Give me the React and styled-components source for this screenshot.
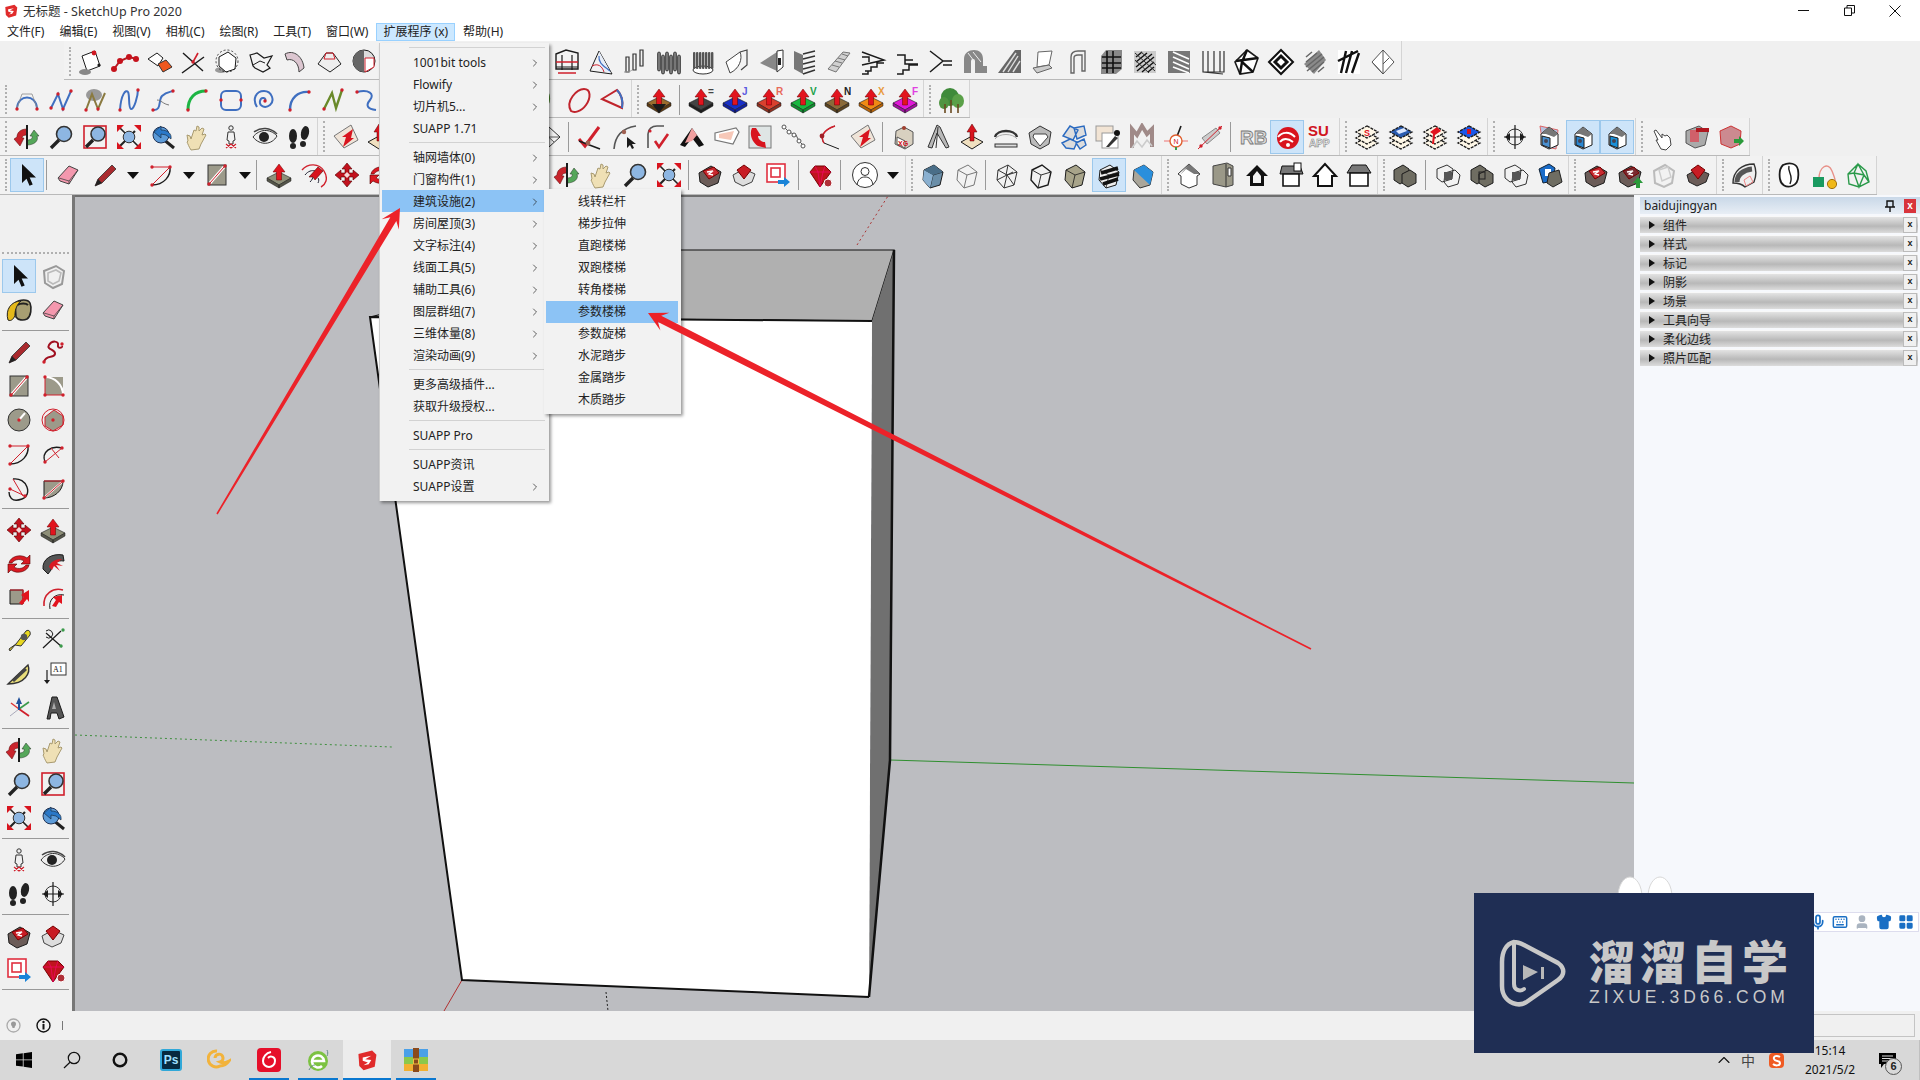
import React from "react";
import styled, { createGlobalStyle } from "styled-components";
import { ChevronRight, ChevronUp, Keyboard, LayoutGrid, Mic, Shirt, User } from "lucide-react";

const R = "#d0202c";
const K = "#1b1b1b";
const F = "#9c9a8a";
const BL = "#3f6fc0";

const arc = (d, c = K, w = 1.4) => <path d={d} fill="none" stroke={c} strokeWidth={w} />;
const dot = (x, y, c = R, r = 1.7) => <circle cx={x} cy={y} r={r} fill={c} />;

const SuLogo = (
  <>
    <path d="M4 7 20 3l5 5-2 14-13 4-5-5z" fill="#e02b2b" />
    <path d="M9 11l10-2-7 4 7 1-3 5-6 1 5-3-6-2z" fill="#fff" />
  </>
);

const push = (top, side, label, lc) => (
  <>
    <path d="M2 17 14 11l12 6-12 7z" fill={top} stroke={K} strokeWidth=".6" />
    <path d="M2 17v3l12 7v-3zM26 17v3l-12 7v-3z" fill={side} stroke={K} strokeWidth=".5" />
    <path d="M14 3l-6 8h3.5v8h5v-8H20z" fill="#e2141e" stroke="#600" strokeWidth=".5" />
    {label && (
      <text x="21" y="9" fontSize="10" fontWeight="700" fill={lc} fontFamily="Liberation Sans, sans-serif">
        {label}
      </text>
    )}
  </>
);

// three stacked sheets, only the top one takes the colour
const layers = (top, mark) => (
  <>
    {[20, 15].map((y) => (
      <path key={y} d={`M14 ${y - 6}l11 6-11 6-11-6z`} fill="#fff8e8" stroke={K} strokeWidth="1.3" strokeDasharray="3 1" />
    ))}
    <path d="M14 3l11 6-11 6-11-6z" fill={top} stroke={K} strokeWidth="1.3" strokeDasharray="3 1" />
    {mark}
  </>
);

const hatch = (c, w = 1.5) => arc("M5 9l6-5M5 14l11-9M5 19l16-13M6 23l17-14M11 24l12-10M17 24l6-5", c, w);

const house = (c, plane) => (
  <>
    {plane && <path d="M5 3l18 4-2 19-13-3z" fill="#b8c4e0" stroke="#d66" />}
    <path d="M14 4l9 7v11l-9 4-8-4V11z" fill="#fff" stroke={K} />
    <path d="M14 4l9 7-4 3-8-3-5 0z" fill="#777" />
    <path d="M7 13l8 2v10l-8-3z" fill={c} stroke={K} />
    <circle cx="11" cy="18" r="2" fill="#445" />
  </>
);

const box = (a, b, c) => (
  <>
    <path d="M5 9 15 4l9 7-3 13-10 3-7-8z" fill={a} stroke={K} />
    <path d="M5 9l9 5 10-3M14 14l-3 13" fill="none" stroke={K} strokeWidth=".8" />
    {b && <path d="M5 9l9 5-3 13-7-8z" fill={b} />}
    {c && <path d="M15 4l9 7-10 3-9-5z" fill={c} />}
  </>
);

const ruby = (
  <>
    <path d="M4 11 9 5h10l6 6-11 15z" fill="#c0141e" stroke="#700" />
    <path d="M4 11h21M9 5l3 6 2 15 3-15 2-6" fill="none" stroke="#f07" strokeWidth=".6" />
  </>
);

const rubybook = (c) => (
  <>
    <path d="M3 12 15 5l10 6-3 11-10 4-8-5z" fill="#6b5c58" stroke={K} />
    <path d="M7 10l11-4 5 6-10 6z" fill={c} stroke="#700" />
    <path d="M11 11l6-1-4 3 4 1" fill="none" stroke="#fff" strokeWidth="1.3" />
  </>
);

const cubes = (c, d) => (
  <>
    <path d="M3 9l9-5 6 4v10l-9 5-6-4z" fill={c} stroke={K} />
    <path d="M11 13l8-4 6 4v9l-8 4-6-4z" fill={d} stroke={K} />
  </>
);

const wires = (
  <>
    {arc("M3 8l10-4 6 4-1 10-10 3-5-4z", "#333", 1)}
    {arc("M11 12l10-3 5 5-2 9-10 3-4-5z", "#333", 1)}
    <rect x="10" y="11" width="8" height="8" fill="#555" />
  </>
);

const stairs = (d) => arc(d, K, 1.5);

const icons = {
  select: <path d="M9 3v19l4.5-4.2 3 7 3.2-1.4-3-6.8H23z" fill="#111" />,
  eraser: (
    <>
      <path d="M4 17 15 5l9 4-9 14-9-3z" fill="#f498ae" stroke="#444" />
      <path d="M5 17l10 3 9-11M15 20v3" fill="none" stroke="#444" strokeWidth=".8" />
    </>
  ),
  pencil: (
    <>
      <path d="M4 25l3-7L21 4l4 4-14 14z" fill="#a92a2e" stroke="#333" strokeWidth=".8" />
      <path d="M4 25l3-7 4 4z" fill="#222" />
    </>
  ),
  arcTool: <>{arc("M5 24C17 24 24 15 23 6")}{arc("M5 24 23 6M5 6h18M5 6l0 0", R, 1)}{dot(5, 6)}{dot(23, 6)}{dot(5, 24)}</>,
  rectTool: <><rect x="5" y="4" width="18" height="20" fill={F} stroke="#333" />{arc("M7 22 21 6", "#fff", 3)}{arc("M7 22 21 6", R, 1)}{dot(6, 23)}{dot(22, 5)}</>,
  squiggle: <>{arc("M5 24c2-8 10-3 11-8S7 12 10 7s10-4 9 0 5 3 4 1", "#a01020", 2)}{dot(5, 24)}{dot(23, 6)}</>,
  arcRect: <><path d="M6 5h18v18H6z" fill={F} />{arc("M6 5c10 0 18 8 18 18", "#fff", 2)}{arc("M6 5v18h18", R, 1)}{dot(6, 5)}{dot(6, 23)}{dot(24, 23)}</>,
  circleTool: <><circle cx="14" cy="14" r="11" fill={F} stroke="#333" />{arc("M14 14l6-7", "#fff", 2)}{dot(14, 14)}</>,
  polyTool: <><path d="M6 11l9-7 9 6v9l-10 6-8-5z" fill={F} stroke={R} /><circle cx="14" cy="14" r="11" fill="none" stroke={R} />{dot(14, 14)}</>,
  arc2: <>{arc("M6 22C2 12 12 5 23 8", K)}{arc("M6 22 23 8M12 8l8 10", R, 1)}{dot(6, 22)}{dot(23, 8)}</>,
  arc3: <>{arc("M8 5c14-2 20 16 9 20S4 22 4 18", K)}{arc("M5 15l15 7M8 5l10 17", R, 1)}{dot(5, 15)}{dot(20, 22)}</>,
  pie: <><path d="M5 24V7h19C24 17 15 24 5 24z" fill={F} stroke={K} />{arc("M6 23 23 8", "#fff", 2)}{arc("M5 7h19M5 24 24 7", R, 1)}{dot(5, 24)}{dot(24, 7)}</>,
  move: (
    <>
      <path d="M14 2l5 6h-3v4h4V9l6 5-6 5v-3h-4v4h3l-5 6-5-6h3v-4H8v3l-6-5 6-5v3h4V8H9z" fill="#c2121e" stroke="#500" strokeWidth=".6" />
      <path d="M14 11l3 3-3 3-3-3z" fill="#f4d8d8" />
    </>
  ),
  pushBox: push("#8e8f78", "#55564a", null),
  rotate: <><path d="M4 13C5 7 15 3 22 8l3-3v9h-9l3-3c-5-3-10-1-12 2z" fill="#d91a22" stroke="#500" strokeWidth=".6" /><path d="M24 15c-1 6-11 10-18 5l-3 3v-9h9l-3 3c5 3 10 1 12-2z" fill="#d91a22" stroke="#500" strokeWidth=".6" /></>,
  followMe: <><path d="M4 19C3 9 13 3 24 5l1 6c-7-1-12 2-13 9l-3 4z" fill="#555" stroke={K} /><path d="M10 17c1-5 6-8 13-8l-5 4 6 3-7-1 4 6-6-5-2 4z" fill="#d91a22" /></>,
  followTool: <>{arc("M3 9C9 2 20 2 25 10s1 14-3 16", "#d0202c", 1.4)}{arc("M6 14c3-4 7-5 10-4M11 21c2-2 3-4 3-6M19 22c1-2 1-4 0-5", "#223", 1)}<path d="M10 16 19 6l5 4-8 9-2-3z" fill="#d8141e" stroke="#500" strokeWidth=".6" /></>,
  scale: <><path d="M5 6h13v14H5z" fill={F} stroke={K} />{arc("M5 6h13v14", R, 1.2)}<path d="M24 6l-8 5 3 2-5 6 3 2 5-6 2 3z" fill="#e2141e" /></>,
  offset: <>{arc("M5 22C4 10 14 3 24 6", R, 1.6)}{arc("M11 25C9 16 16 9 25 11", K, 1)}<path d="M23 11l-9 2 3 3-4 6 4 1 3-5 3 2z" fill="#e2141e" /></>,
  paint: <><path d="M10 7c5-4 13-4 15 0 2 5 1 13-3 16-4 2-9 1-11-2z" fill="#a79e72" stroke="#222" strokeWidth="1.6" /><path d="M12 9c4-2 9-2 11 0" fill="none" stroke="#222" strokeWidth="2" /><path d="M3 24C0 14 6 5 16 5c-4 3-6 9-6 13 0 4-4 8-7 6z" fill="#e5b91a" stroke="#222" /></>,
  ghost: <>{arc("M5 9l12-5 8 5-2 13-9 4-8-5z", "#999", 2)}{arc("M9 11l8-3 5 3-2 8-6 3-5-3z", "#bbb", 1.6)}</>,
  tape: <><path d="M4 23l7-5 10-13c3-2 5 1 4 4l-9 11-6-1-5 6z" fill="#e8d820" stroke="#333" /><circle cx="19" cy="11" r="3.2" fill="#555" /></>,
  guide: <>{arc("M4 22 22 5M7 7l16 14", K, 1.2)}{dot(22, 20, "#3a9a4a")}{dot(24, 4, "#3a9a4a")}{arc("M7 5a4 4 0 1 1 0 6", K, 1)}</>,
  protractor: <><path d="M3 24 23 5c3 8-3 19-20 19z" fill="#e8dd7a" stroke="#333" strokeWidth="1.4" />{arc("M8 21 21 9", "#444", 3)}</>,
  text3: <><rect x="12" y="3" width="15" height="12" fill="#fff" stroke="#333" /><text x="14" y="12" fontSize="8" fontFamily="Liberation Serif, serif" fill="#111">A1</text>{arc("M8 10v11", K, 1.2)}<path d="M5 20h6l-3 4z" fill={K} /></>,
  axes: <>{arc("M14 15 6 9", "#d33", 1.4)}{arc("M14 15 24 8", "#3a9a4a", 1.6)}{arc("M14 15 24 22", R, 1.8)}{arc("M14 15 5 22", "#aab", 1)}<path d="M14 3l-3 7h2v6h2v-6h2z" fill="#20509a" /></>,
  a3d: <><path d="M8 25 13 3h5l7 20-5 2-2-6h-6l-1 6z" fill="#555" stroke={K} /><path d="M13 15h4l-2-7z" fill="#aaa" /></>,
  orbit: (
    <>
      <path d="M4 14c0-5 4-8 10-8v6c-3 0-5 1-5 3l2 0-4 8-6-7z" fill="#c8242c" stroke="#500" strokeWidth=".5" />
      <path d="M24 13c2 5-3 9-10 9v-5c3 0 6-1 5-4l-2 0 4-6 5 6z" fill="#55a75a" stroke="#232" strokeWidth=".5" />
      <path d="M14 2v24" stroke={K} strokeWidth="2" />
    </>
  ),
  mag: <>{arc("M4 25l8-8", "#222", 3.4)}<circle cx="17" cy="11" r="7.5" fill="#8db6e2" stroke="#333" strokeWidth="1.6" /></>,
  zoomWin: <><rect x="3" y="3" width="22" height="22" fill="none" stroke="#d0202c" strokeWidth="1.6" />{arc("M5 24l7-7", "#222", 3.4)}<circle cx="17" cy="11" r="7" fill="#8db6e2" stroke="#333" strokeWidth="1.6" /></>,
  zoomExt: <>{arc("M4 24 20 8", "#222", 2.2)}{arc("M5 5l5 5M23 23l-5-5", "#222", 1.6)}<circle cx="14" cy="14" r="5.8" fill="#8db6e2" stroke="#333" /><path d="M2 2h7L2 9zM26 2h-7l7 7zM2 26h7L2 19zM26 26h-7l7-7z" fill="#d8141e" /></>,
  zoomPrev: <>{arc("M14 16l11 9", "#222", 3)}<circle cx="12" cy="12" r="8" fill="#5c9bd8" stroke="#235" /><path d="M5 9l7-6v4c7 0 11 4 10 9l-5-4-5-1v4z" fill="#2a78c8" stroke="#123" strokeWidth=".6" /></>,
  hand: <path d="M5 18 4 12l3 1 1 3 3-9 2 1 1-5 2 1v4l3-3 2 1-2 6 3-1 1 1-5 9-2 5-8 1c-2-3-3-6-4-8z" fill="#efe0b5" stroke="#a89a70" />,
  handO: <path d="M7 7l6 8 0-4 3 2 2-1 3 3 1 7-5 5-5-1-5-9 2 0-4-9z" fill="#fff" stroke="#444" />,
  walk: <><circle cx="14" cy="5" r="2.2" fill="none" stroke="#333" />{arc("M11 9h6l1 8-2 1v3h-4v-3l-2-1z", "#333", 1)}{arc("M9 25l5-4 5 4M9 21l5 4 5-4", R, 1.2)}</>,
  eye: <><path d="M2 14c6-8 17-9 24-1-5 9-17 10-24 1z" fill="#eee" stroke="#333" /><circle cx="13" cy="14" r="5" fill="#222" /><path d="M3 9c7-5 16-5 23 2" fill="none" stroke="#444" strokeWidth="1.5" /></>,
  feet: <><ellipse cx="8" cy="13" rx="4" ry="7" fill="#222" /><rect x="5" y="20" width="6" height="6" rx="3" fill="#222" /><ellipse cx="20" cy="10" rx="4" ry="7" fill="#222" transform="rotate(12 20 10)" /><rect x="15" y="18" width="6" height="6" rx="3" fill="#222" /></>,
  compass: <><circle cx="14" cy="14" r="8" fill="none" stroke="#333" />{arc("M14 2v24M3 14h22", K, 1.2)}<path d="M24 14l-5-4v8zM4 14l5-4v8z" fill={K} /></>,
  page: <><path d="M5 8l13-5 5 15-13 5z" fill="#fff" stroke={K} /><ellipse cx="8" cy="24" rx="6" ry="3" fill="#888" />{dot(17, 5, "#d01822", 2.4)}{dot(22, 17, K, 1.6)}</>,
  dotline: <>{arc("M3 21 9 13l9-4 8 2", "#b41a22", 2)}{dot(3, 21, "#c5121c", 3)}{dot(9, 13, "#c5121c", 3)}{dot(18, 9, "#c5121c", 3)}{dot(25, 11, "#c5121c", 3)}</>,
  orangebox: <><path d="M3 11l9-6 6 5-5 8z" fill="#fff" stroke={K} /><path d="M13 16l8-4 6 7-9 5z" fill="#f0581e" stroke="#333" /></>,
  xline: <>{arc("M4 5l20 18", K, 1.4)}{arc("M3 25 25 9", K, 1.4)}{arc("M14 14 19 5", R, 1.6)}{dot(14, 14)}</>,
  dashcircle: <><ellipse cx="8" cy="22" rx="6" ry="3" fill="#999" /><path d="M6 9l9-5 8 6-1 11-9 3-7-6z" fill="#fff" stroke={K} /><circle cx="14" cy="13" r="11" fill="none" stroke={K} strokeDasharray="2 2" strokeWidth=".8" /></>,
  outlinebox: <>{arc("M3 7l7-2 7 5 8-2-5 9 3 3-7 4-8-4-2-2z", K, 1.2)}{arc("M6 17l7-4 5 2", K, 1)}</>,
  ribbon: <path d="M4 6c9-5 18 3 19 14l-5 4C18 15 12 10 6 12z" fill="#dcc6d0" stroke="#444" />,
  roofbox: <><path d="M3 16 11 5h7l8 11-11 8z" fill="#eee" stroke="#222" /><path d="M11 5h7l2 6H9z" fill="none" stroke={R} /></>,
  sphere: <><circle cx="15" cy="13" r="11" fill="#ddd" stroke={K} /><path d="M4 13a11 11 0 0 1 11-11v22A11 11 0 0 1 4 13z" fill="#666" /><path d="M16 10h9v9l-9 5z" fill="#fff" stroke={R} /></>,
  frame: <>{arc("M3 6 13 2l12 3v16H3z", K, 1.4)}{arc("M3 19h22M9 7v15M19 7v15", K, 1.2)}{arc("M3 14h22M5 25h18", R, 1.6)}</>,
  tri: <>{arc("M12 3l-9 20 22 3z", K, 1)}<path d="M12 3l12 22-10-2c-2-6-3-12-2-20z" fill="#e8eef8" />{arc("M12 8c-1 7 5 10 11 15", BL, 1.2)}{arc("M5 18c6-3 10 0 12 6", R, 1)}</>,
  cols: <>{arc("M5 12v12h3V9H5zM12 9v13h3V6h-3zM19 4v14h3V2h-3z", "#333", 1.2)}<path d="M3 24c5 0 7-1 8-2" stroke="#999" fill="none" /></>,
  bundle: <>{[4, 8, 12, 16, 20, 24].map((x, i) => (<rect key={x} x={x - 1.5} y={4 + (i % 2) * 3} width="3" height="19" rx="1.5" fill="#777" stroke="#111" strokeWidth=".6" />))}</>,
  cyl: <><ellipse cx="14" cy="22" rx="10" ry="4" fill="#fff" stroke="#333" />{[5, 8, 11, 14, 17, 20, 23].map((x) => (<rect key={x} x={x - 1} y="4" width="2.4" height="17" rx="1" fill="#555" />))}</>,
  door: <><path d="M3 14 17 4c3 7-1 17-10 21z" fill="#fff" stroke="#444" />{arc("M17 4l7-2v15l-6 5", "#444", 1.2)}</>,
  wedge: <><path d="M3 15 20 4v19z" fill="#888" /><path d="M20 3l6-1v17l-6 5z" fill="#fff" stroke="#333" /><rect x="21" y="10" width="3" height="7" fill="#222" /></>,
  stack: <><path d="M3 3l9 4v19l-9-5z" fill="#777" />{arc("M12 6l12-3M12 11l12-3M12 16l12-3M12 21l12-3M12 26l12-4", "#333", 1.5)}</>,
  ramp: <><path d="M3 21 18 4l7 1-14 19z" fill="#d0d0d0" stroke="#777" />{arc("M7 17l7 2M10 13l7 2M13 10l7 2M17 6l6 2", "#777", 1)}</>,
  stairA: stairs("M3 4l22 8-22 5M3 9h7v5M6 23h6v-4h6v-4h7M3 26h6v-3"),
  stairB: stairs("M4 7h8v5h8M12 12v4h13M4 26h6v-4h6v-5h9"),
  stairC: stairs("M3 3l13 10-13 11M16 13h9M16 17h9"),
  arch: <><path d="M3 25V11C3 5 8 2 13 2s9 3 9 9v7h4v7H14V13a2 2 0 0 0-4 0v12z" fill="#888" /><path d="M12 4l8 10M7 5l6 8" stroke="#eee" fill="none" /></>,
  slope: <><path d="M3 25 20 2h6v23z" fill="#666" />{arc("M8 24 21 5M13 24 23 8M18 24l7-11", "#ddd", 1.4)}</>,
  screen: <><path d="M9 4l14-1-3 14-12 2z" fill="#fff" stroke="#666" /><path d="M4 20l16-3 3 3-15 5z" fill="#ccc" stroke="#666" /></>,
  hook: <>{arc("M8 25V9c0-4 3-6 7-6h7v20h-3V7h-4c-2 0-4 1-4 3v15z", "#666", 1.4)}</>,
  gridwin: <><path d="M4 8l5-6h16v19l-6 5H4z" fill="#888" />{arc("M10 3v22M16 3v22M5 9h19M5 15h19M5 20h19", "#111", 1.6)}</>,
  hatch: <><rect x="3" y="3" width="22" height="22" fill="#ccc" />{hatch("#111", 1.4)}{arc("M4 5l20 18M4 12l14 13M10 4l15 13", "#333", 1)}</>,
  stack2: <><rect x="3" y="3" width="22" height="22" fill="#777" />{arc("M8 4l16 7M8 9l16 7M8 14l16 7M8 19l16 6", "#fff", 1.6)}</>,
  fence: <>{arc("M4 3v21h5V3M9 24h6V3M15 24h6V3M21 24h4V3M4 24l20 2", "#333", 1.2)}</>,
  weave: <><path d="M14 2l11 8-5 14-13 2-5-12z" fill="#fff" stroke={K} strokeWidth="1.6" />{arc("M14 2 9 14l11 10M3 13l22-3M9 14l-2 12", "#111", 2.4)}</>,
  diamond: <><path d="M14 2l12 12-12 12L2 14z" fill="#fff" stroke="#111" strokeWidth="2" />{arc("M8 14l6-6 6 6-6 6z", "#111", 3)}</>,
  graystripe: <><path d="M3 16 18 2l7 10-12 14z" fill="#8a8a8a" />{hatch("#666", 1.5)}</>,
  zebra: <><rect x="3" y="2" width="22" height="24" fill="#fff" />{arc("M6 25 11 3M11 25l6-22M17 25l7-20M3 13l20-10", "#111", 2.4)}</>,
  cubeOut: <><path d="M14 2l11 12-11 12L3 14z" fill="#fff" stroke="#555" />{arc("M14 2v14M3 14l11 12 0-10 6-6", "#555", 1)}</>,
  bezier: <>{arc("M4 22C5 8 23 8 24 22", BL, 2)}{arc("M4 22l5-14h10l5 14", "#8a8a8a", .8)}{dot(4, 23)}{dot(24, 23)}</>,
  zig: <>{arc("M4 22 11 8l5 15 8-18", BL, 2)}{dot(4, 22)}{dot(11, 8)}{dot(16, 23)}{dot(24, 5)}</>,
  zigsmoke: <><ellipse cx="13" cy="9" rx="8" ry="6" fill="#999" />{arc("M5 24 11 8l6 15 7-16", "#8a7a40", 2)}{dot(5, 24)}{dot(17, 23)}</>,
  wave: <>{arc("M5 24C6 8 11 3 13 6s0 16 3 17 7-13 7-20", BL, 2)}{dot(5, 24)}{dot(23, 4)}</>,
  scurve: <>{arc("M4 24c9 1 5-10 9-14s8-4 11-5", BL, 2)}{arc("M8 14c4 0 6 4 12 5", "#777", 1)}{dot(4, 24)}{dot(24, 5)}</>,
  greenarc: <>{arc("M5 24C5 12 12 5 23 5", "#1db544", 3)}{dot(5, 24)}{dot(23, 5)}</>,
  roundrect: <><rect x="4" y="5" width="20" height="19" rx="5" fill="none" stroke={BL} strokeWidth="2" />{dot(4, 14)}{dot(24, 14)}</>,
  spiral: <>{arc("M14 15c2-3-4-5-5 0s5 8 10 4 2-14-6-14S1 13 6 21", BL, 2)}{dot(14, 15)}</>,
  arcblue: <>{arc("M5 24C5 12 13 5 24 6", BL, 2.4)}{dot(5, 24)}{dot(24, 6)}</>,
  greenzig: <>{arc("M5 23 13 7l4 15 6-18", "#6a8a2a", 2.4)}{dot(5, 23)}{dot(23, 4)}</>,
  hookcurve: <>{arc("M4 6c12-3 18 2 13 8s-2 9 6 10", BL, 2)}{dot(4, 6)}</>,
  oval: <path d="M6 25C0 15 12 3 19 3s7 9 2 16-12 8-15 6z" fill="none" stroke="#c0242c" strokeWidth="2" />,
  roundtri: <>{arc("M3 13 18 4c5 5 6 12 5 18z", "#c0242c", 2)}{arc("M18 4c5 5 6 12 5 18", BL, 2)}</>,
  greenhook: <>{arc("M14 4c5 5 5 13-1 18", "#4a8a2a", 3)}</>,
  pushDrop: <>{push("#9a6c2e", "#5c3a12", null)}<path d="M14 27l-7-9h14z" fill={K} /></>,
  pushBlack: push("#444", "#1f1f1f", "=", "#444"),
  pushBlue: push("#1830c8", "#1020a0", "J", "#5a5ae0"),
  pushRed: push("#d8402e", "#903020", "R", "#e86a5a"),
  pushGreen: push("#18b840", "#109030", "V", "#18a048"),
  pushBrown: push("#8a6a3a", "#5c4420", "N", "#222"),
  pushOrange: push("#f08a14", "#b86408", "X", "#e89a40"),
  pushPink: push("#e018d8", "#a010a0", "F", "#e040e0"),
  tree: <><ellipse cx="13" cy="11" rx="9" ry="9" fill="#3f8a3a" /><ellipse cx="21" cy="15" rx="6" ry="7" fill="#5aa048" /><ellipse cx="7" cy="17" rx="5" ry="6" fill="#4e9440" />{arc("M8 18v9M14 14v13M21 18v9", "#6a4a20", 1.6)}</>,
  mesh: <><path d="M3 14 14 4l11 10-11 10z" fill="none" stroke="#333" />{arc("M8 9l11 10M14 4v20M3 14h22", "#333", .8)}</>,
  check: <>{arc("M3 16l6 7 14-19", "#d0202c", 3)}{arc("M3 18l21 8", K, 1.5)}{dot(12, 20, "#a06050", 2.4)}</>,
  curvecursor: <>{arc("M4 26C5 12 13 5 26 3", "#555", 1.6)}{dot(14, 9, "#a06050", 2.2)}<path d="M17 14v11l3-3 2 4 2-1-2-4h4z" fill={K} /></>,
  curvecheck: <>{arc("M4 25V11C4 6 8 3 13 3h7", "#555", 1.6)}{dot(6, 8, R, 1.6)}{arc("M11 18l4 6 9-13", R, 2.6)}</>,
  pinkroof: <><path d="M2 22 14 5l12 17-5 2-7-9-7 9z" fill="#111" /><path d="M7 20 14 5l5 7-5 6z" fill="#f0a0a0" /></>,
  pinkrect: <><path d="M3 10 24 5l3 4-6 12-18-4z" fill="#fff" stroke="#777" strokeWidth="1.2" /><path d="M7 11l15-3-3 9-12-2z" fill="#f7c8b8" /></>,
  curl: <><rect x="3" y="3" width="22" height="22" fill="#dfe5e5" stroke="#777" /><path d="M6 5c-3 6 0 14 6 18l8 2-1-6c-4 0-7-3-7-6h3l-5-8z" fill="#d8141e" /></>,
  chain: <>{arc("M4 4l5 5 7 3 3 6 5 5", "#555", 1)}{[[4, 4], [9, 9], [14, 12], [19, 18], [23, 23]].map(([x, y]) => (<circle key={x} cx={x} cy={y} r="2" fill="#fff" stroke="#555" />))}</>,
  arcdot: <>{arc("M21 3C9 7 6 14 10 20l15 6", K, 1)}{arc("M21 3C9 7 6 14 10 20", R, 1.5)}{dot(8, 13, "#a02028", 2.4)}</>,
  paperarrow: <><path d="M3 13 20 2l7 15-14 8z" fill="#efe4d8" stroke="#777" /><path d="M22 6l-2 9 3 0-11 9 3-10h-4z" fill="#d8141e" /></>,
  stamp: <><path d="M6 8l8-4 9 5v12l-8 5-10-5z" fill="#d8d0c0" stroke="#555" /><path d="M7 14l8 4v7l-8-4z" fill="#fff" stroke="#555" /><text x="8" y="23" fontSize="7" fontWeight="700" fill="#d01020" fontFamily="Liberation Sans, sans-serif">XG</text><circle cx="14" cy="5" r="2" fill="#a04030" /></>,
  ramps: <><path d="M4 24 13 2l3 2 9 20-3 1-9-15-5 15z" fill="#b8b8b8" stroke="#333" />{arc("M14 4l-2 21", "#333", 1)}</>,
  pushUp: <><path d="M3 19l11-6 11 6-11 7z" fill="#f0e0c0" stroke={K} /><path d="M14 1l-5 8h3v9h4V9h3z" fill="#d8141e" stroke="#500" strokeWidth=".5" /></>,
  bridge: <>{arc("M3 14c2-8 20-8 22 0", "#333", 2.4)}{arc("M3 16c4-6 18-6 22 0", "#aaa", 1)}<rect x="3" y="21" width="22" height="3" fill="#ddd" stroke="#333" /></>,
  gemcube: <><path d="M3 10 14 3l11 6-2 12-9 5-9-5z" fill="#bbb" stroke="#333" /><path d="M8 11h12l2 3-8 9-7-9z" fill="#fff" stroke="#444" /></>,
  bluecubes: <><path d="M3 13 10 3l8 4-5 10zM14 5l10-2 2 9-9 4zM2 20l8-4 7 3-3 7-8-1zM16 20l8-4 2 6-6 4z" fill="#ddd" stroke="#2a6ac0" strokeWidth="1.4" /></>,
  pipette: <><rect x="2" y="3" width="17" height="15" fill="#f2e4d4" stroke="#999" /><rect x="8" y="10" width="16" height="15" fill="#fff" stroke="#999" /><path d="M12 24l9-11 3 2-9 9z" fill="#333" /><circle cx="23" cy="10" r="3" fill="#111" /></>,
  mmm: <>{arc("M4 25V6l5 6 5-9 5 8 5-5v18", "#a08a88", 4)}{arc("M4 25l5-7 5 6 5-7 5 6", "#ccc", 1.6)}</>,
  target: <>{arc("M19 3 14 16", "#1a1a1a", 1.6)}{arc("M2 18h24", "#e88", 1.2)}<circle cx="14" cy="18" r="6" fill="#fff" stroke="#e06030" strokeWidth="1.4" /><text x="11.5" y="21" fontSize="7" fill="#d02020" fontFamily="Liberation Sans, sans-serif">N</text>{arc("M14 24v3", "#3a9a4a", 2)}</>,
  capsule: <><path d="M6 15 20 5l4 5-13 11z" fill="#ccc" stroke="#888" />{arc("M2 26 26 3", R, 1)}{dot(5, 23)}{dot(24, 5)}</>,
  rb3d: <text x="1" y="21" fontSize="19" fontWeight="700" fill="#d8d8d8" stroke="#777" strokeWidth=".8" fontFamily="Liberation Sans, sans-serif">RB</text>,
  suRed: <><circle cx="15" cy="15" r="11" fill="#d8141e" />{arc("M5 14c4-5 11-6 17 0M7 19c3-4 8-4 13 0", "#fff", 2)}<circle cx="15" cy="22" r="2" fill="#fff" /></>,
  suApp: (
    <>
      <text x="1" y="13" fontSize="15" fontWeight="900" fill="#d0141e" fontFamily="Liberation Sans, sans-serif">SU</text>
      <text x="2" y="24" fontSize="10" fontWeight="700" fill="#eee" stroke="#777" strokeWidth=".5" fontFamily="Liberation Sans, sans-serif">APP</text>
    </>
  ),
  layerS: layers("#fff8e8", <text x="11" y="13" fontSize="9" fontWeight="700" fill="#e0141e" fontFamily="Liberation Sans, sans-serif">S</text>),
  layerB: layers("#2a5cb0", <path d="M9 8l8-3 3 3-8 3z" fill="#dce8ff" />),
  layerQ: layers("#fff8e8", <path d="M9 9l7-5 4 4-6 4-1 9h-2l1-10z" fill="#e0141e" />),
  layerF: layers("#1c58e8", <rect x="12" y="6" width="4" height="5" fill="#d8141e" />),
  homePlane: house("#4a90d0", true),
  homeA: house("#2a86d0"),
  homeB: house("#1a90d8"),
  bookR: <><path d="M3 8l13-5 9 6-3 13-10 3-9-5z" fill="#aaa" stroke="#555" /><rect x="7" y="7" width="9" height="12" fill="#d0606a" /><path d="M13 5h13v4H13z" fill="#b01820" /></>,
  bookG: <><path d="M3 8l11-5 10 5-1 13-9 4-10-4z" fill="#cc8a90" stroke="#c33" /><path d="M17 16h5v-3l5 5-5 5v-3h-5z" fill="#2a9a3a" /></>,
  personRound: <><circle cx="14" cy="14" r="12.5" fill="#fff" stroke="#333" /><circle cx="14" cy="10.5" r="4" fill="none" stroke="#333" />{arc("M6 24c1-6 4-8 8-8s7 2 8 8", "#333", 1)}</>,
  rubyStack: rubybook("#c81c24"),
  rubyOpen: <><path d="M3 14 14 8l11 5-3 8-9 4-8-4z" fill="#ddd" stroke="#444" /><path d="M7 9l7-5 7 5-7 9z" fill="#c81c24" stroke="#700" /></>,
  rssBook: <><rect x="3" y="3" width="18" height="18" fill="#fff" stroke="#e03040" strokeWidth="1.6" /><rect x="7" y="7" width="9" height="9" fill="none" stroke="#e03040" strokeWidth="1.6" /><path d="M14 19h6v-3l6 5-6 5v-3h-6z" fill="#1a84d8" /></>,
  rubyGear: <>{ruby}<circle cx="22" cy="22" r="4" fill="#b03038" stroke="#fff" /></>,
  cubeBlue: box("#6a8ea8", "#8ab0d0", "#4a6e88"),
  cubeWire: <>{arc("M5 9 15 4l9 7-3 13-10 3-7-8zM5 9l9 5 10-3M14 14l-3 13", "#777", 1)}</>,
  cubeX: <>{arc("M5 9 15 4l9 7-3 13-10 3-7-8zM5 9l9 5 10-3M14 14l-3 13M15 4l-2 10M4 19l16-8M21 24 14 14", "#333", 1)}</>,
  cubeHidden: <>{arc("M5 9 15 4l9 7-3 13-10 3-7-8z", K, 1.4)}{arc("M5 9l9 5 10-3M14 14l-3 13", "#333", 1)}</>,
  cubeShade: box("#a8a48a"),
  cubeZebra: <>{box("#eee")}{arc("M6 12l17-5M5 18l19-5M8 23l15-5", "#111", 3.5)}</>,
  cubeSplit: <><path d="M5 9 15 4l9 7-3 13-10 3-7-8z" fill="#aaa69a" stroke="#333" /><path d="M15 4l9 7-3 13-16-15z" fill="#2a8fdc" /></>,
  homeGray: <><path d="M3 13 14 3l11 10-3 2v9l-8 3-8-4v-8z" fill="#fff" stroke="#333" /><path d="M14 3l11 10-6 0-8-5-6 6z" fill="#777" /></>,
  doorBox: <><path d="M4 5l14-3 6 3v19l-7 2-13-3z" fill="#9a9888" stroke="#444" /><path d="M17 3v23M19 7h3v8h-3z" fill="#fff" stroke="#333" /></>,
  homeBlack: <path d="M14 4 3 15h4v10h14V15h4zM10 15l4-5 4 5v7h-8z" fill="#111" fillRule="evenodd" />,
  homeTop: <><path d="M5 5h18l3 8H3z" fill="#777" stroke="#111" /><path d="M6 13h16v12H6z" fill="#fff" stroke="#111" strokeWidth="1.6" /><rect x="17" y="2" width="7" height="8" fill="#fff" stroke="#111" /></>,
  homeOutline: <path d="M14 3 3 15h4v10h14V15h4z" fill="#fff" stroke="#111" strokeWidth="2" />,
  homeFlat: <><path d="M7 4h14l5 8H2z" fill="#777" stroke="#111" /><path d="M5 12h18v13H5z" fill="#fff" stroke="#111" strokeWidth="1.6" /></>,
  compA: cubes("#6f6d62", "#6f6d62"),
  compB: wires,
  compC: <>{cubes("#6f6d62", "#6f6d62")}<rect x="11" y="11" width="6" height="7" fill="none" stroke="#222" /></>,
  compE: <><path d="M3 8l10-5 6 4-2 13-10 2z" fill="#1a6cc8" stroke="#123" /><rect x="9" y="8" width="6" height="7" fill="#fff" /><path d="M13 12l10-3 3 12-9 5-6-4z" fill="#6f6d62" stroke="#222" /></>,
  suBook: rubybook("#c82a30"),
  suBookUp: <>{rubybook("#7a2a30")}<path d="M20 27v-5h-3l5-6 5 6h-3v5z" fill="#2a9a3a" /></>,
  suBookGray: <>{arc("M4 10 15 4l9 6-2 12-8 4-9-4z", "#bbb", 2)}{arc("M9 9l9-3 3 10-9 4z", "#ccc", 1.4)}</>,
  suBookRuby: <><path d="M3 14 14 8l11 5-3 8-9 4-8-4z" fill="#6b5c58" stroke="#222" /><path d="M7 9l7-5 7 5-7 9z" fill="#c81c24" stroke="#700" /></>,
  shell: <><path d="M3 22C3 10 12 3 24 3c3 7 2 13 0 18l-9 5c-3-3-8-4-12-4z" fill="#eee" stroke="#333" strokeWidth="1.4" /><path d="M7 21c0-7 6-12 15-13" fill="none" stroke="#555" strokeWidth="5" /><path d="M14 19l6-4 3 6-7 4z" fill="none" stroke="#e88" /></>,
  rock: <><path d="M7 4c6-3 14-2 15 5s0 14-6 16-11-1-12-7 0-11 3-14z" fill="#fff" stroke={K} strokeWidth="1.8" />{arc("M13 5c-2 6 5 9 1 18", K, 1.4)}</>,
  bag: <>{arc("M9 18C9 6 18 0 22 10s3 8 3 10", "#e89088", 1.4)}<rect x="3" y="16" width="11" height="10" fill="#1a9a60" /><circle cx="22" cy="23" r="4.6" fill="#f0b818" stroke="#a07010" /></>,
  crystal: <>{arc("M14 3 22 10l3 11-10 5-10-3-1-10zM14 3l-4 9 5 14 5-12zM4 13l6-1 10 2 5 7", "#2a9a4a", 1.4)}</>,
  blank: <rect x="6" y="6" width="16" height="16" fill="#ccc" />,
};

const S = (l, r) => ({ sep: [l, r] });
const gap = (w) => ({ gap: w });
const on = (name) => ({ name, active: true });

const row1 = [
  { pad: 64, grip: true, items: ["page", "dotline", "orangebox", "xline", "dashcircle", "outlinebox", "ribbon", "roofbox", "sphere", "sphere", "blank", "blank", "blank", "blank", "frame", "tri", "cols", "bundle", "cyl", "door", "wedge", "stack", "ramp", "stairA", "stairB", "stairC", "arch", "slope", "screen", "hook", "gridwin", "hatch", "stack2", "fence", "weave", "diamond", "graystripe", "zebra", "cubeOut"] },
];

const row2 = [
  { grip: true, items: ["bezier", "zig", "zigsmoke", "wave", "scurve", "greenarc", "roundrect", "spiral", "arcblue", "greenzig", "hookcurve"] },
  { items: [gap(6), "blank", "blank", "blank", "blank", "greenhook", "oval", "roundtri"] },
  { grip: true, items: ["pushDrop", S(3, 4), "pushBlack", "pushBlue", "pushRed", "pushGreen", "pushBrown", "pushOrange", "pushPink"] },
  { grip: true, items: ["tree"] },
];

const row3 = [
  { grip: true, items: ["orbit", "mag", "zoomWin", "zoomExt", "zoomPrev", "hand", "walk", "eye", "feet"] },
  { grip: true, items: ["paperarrow", "pushUp", "blank", "blank", "blank", "blank", "mesh", S(2, 4), "check", "curvecursor", "curvecheck", "pinkroof", "pinkrect", "curl", "chain", "arcdot", "paperarrow", S(3, 4), "stamp", "ramps", "pushUp", "bridge", "gemcube", "bluecubes", "pipette", "mmm", "target", "capsule", S(3, 5), "rb3d", on("suRed"), "suApp"] },
  { grip: true, items: ["layerS", "layerB", "layerQ", "layerF"] },
  { grip: true, items: ["compass", "homePlane", on("homeA"), on("homeB")] },
  { grip: true, items: ["handO", "bookR", "bookG"] },
];

const row4 = [
  { grip: true, items: [on("select"), S(2, 4), "eraser", gap(3), "pencil", "v", "arcTool", "v", "rectTool", "v", S(0, 5), "pushBox", "followTool", "move", "rotate", "scale", "offset", "blank", "blank", gap(16), "orbit", "hand", "mag", "zoomExt", S(2, 4), "suBook", "rubyOpen", "rssBook", S(3, 4), "rubyGear", S(3, 7), "personRound", "v"] },
  { grip: true, items: ["cubeBlue", "cubeWire", S(1, 4), "cubeX", "cubeHidden", "cubeShade", on("cubeZebra"), "cubeSplit"] },
  { grip: true, items: ["homeGray", "doorBox", "homeBlack", "homeTop", "homeOutline", "homeFlat"] },
  { grip: true, items: ["compA", S(3, 5), "compB", "compC", "compB", "compE"] },
  { grip: true, items: ["suBook", "suBookUp", "suBookGray", "suBookRuby"] },
  { grip: true, items: ["shell"] },
  { grip: true, items: ["rock", "bag", "crystal"] },
];

const leftTools = [
  [on("select"), "ghost", "paint", "eraser"],
  ["pencil", "squiggle", "rectTool", "arcRect", "circleTool", "polyTool", "arcTool", "arc2", "arc3", "pie"],
  ["move", "pushBox", "rotate", "followMe", "scale", "offset"],
  ["tape", "guide", "protractor", "text3", "axes", "a3d"],
  ["orbit", "hand", "mag", "zoomWin", "zoomExt", "zoomPrev"],
  ["walk", "eye", "feet", "compass"],
  ["rubyStack", "rubyOpen", "rssBook", "rubyGear"],
];

const menuItems = [
  { sep: true },
  { label: "1001bit tools", sub: true },
  { label: "Flowify", sub: true },
  { label: "切片机5...", sub: true },
  { label: "SUAPP 1.71" },
  { sep: true },
  { label: "轴网墙体(0)", sub: true },
  { label: "门窗构件(1)", sub: true },
  { label: "建筑设施(2)", sub: true, hot: true },
  { label: "房间屋顶(3)", sub: true },
  { label: "文字标注(4)", sub: true },
  { label: "线面工具(5)", sub: true },
  { label: "辅助工具(6)", sub: true },
  { label: "图层群组(7)", sub: true },
  { label: "三维体量(8)", sub: true },
  { label: "渲染动画(9)", sub: true },
  { sep: true },
  { label: "更多高级插件..." },
  { label: "获取升级授权..." },
  { sep: true },
  { label: "SUAPP Pro" },
  { sep: true },
  { label: "SUAPP资讯" },
  { label: "SUAPP设置", sub: true },
];

const subItems = ["线转栏杆", "梯步拉伸", "直跑楼梯", "双跑楼梯", "转角楼梯", "参数楼梯", "参数旋梯", "水泥踏步", "金属踏步", "木质踏步"];
const menuBar = ["文件(F)", "编辑(E)", "视图(V)", "相机(C)", "绘图(R)", "工具(T)", "窗口(W)", "扩展程序 (x)", "帮助(H)"];
const panels = ["组件", "样式", "标记", "阴影", "场景", "工具向导", "柔化边线", "照片匹配"];

// tapered annotation arrow: narrow tail, shaft widens toward the head
function arrowPoints([x1, y1], [x2, y2]) {
  const len = Math.hypot(x2 - x1, y2 - y1);
  const ux = (x2 - x1) / len;
  const uy = (y2 - y1) / len;
  const nx = -uy;
  const ny = ux;
  const at = (back, side) => `${x2 - ux * back + nx * side},${y2 - uy * back + ny * side}`;
  return [
    at(len, 0.8),
    at(13, 3.5),
    at(19, 10),
    `${x2},${y2}`,
    at(19, -10),
    at(13, -3.5),
    at(len, -0.8),
  ].join(" ");
}

function Tool({ item, size = 28 }) {
  const name = typeof item === "string" ? item : item.name;
  return (
    <ToolButton $active={item.active}>
      <svg width={size} height={size} viewBox="0 0 28 28">
        {icons[name]}
      </svg>
    </ToolButton>
  );
}

function ToolbarItems({ items }) {
  return items.map((item, i) => {
    if (item === "v") return <Caret key={i} />;
    if (item.sep) return <ToolSep key={i} $l={item.sep[0]} $r={item.sep[1]} />;
    if (item.gap) return <Spacer key={i} $w={item.gap} />;
    return <Tool key={i} item={item} />;
  });
}

function ToolRow({ groups, height, top = 0 }) {
  return (
    <Row $h={height}>
      {groups.map((g, i) => (
        <Group key={i} $pad={g.pad} $top={top}>
          {g.grip && <Grip />}
          <ToolbarItems items={g.items} />
        </Group>
      ))}
    </Row>
  );
}

export default function App() {
  return (
    <>
      <Global />
      <Page>
        <TitleBar>
          <svg width="16" height="16" viewBox="0 0 28 28">
            {SuLogo}
          </svg>
          <TitleText>无标题 - SketchUp Pro 2020</TitleText>
          <WinControls>
            <WinButton>
              <svg width="11" height="11" viewBox="0 0 11 11">
                <path d="M0 5.5h11" stroke="#111" />
              </svg>
            </WinButton>
            <WinButton>
              <svg width="11" height="11" viewBox="0 0 11 11">
                <path d="M.5 3h7v7.500h-7zM3 3V.5h7.500V8H8" fill="none" stroke="#111" />
              </svg>
            </WinButton>
            <WinButton>
              <svg width="12" height="12" viewBox="0 0 12 12">
                <path d="M.5.5l11 11M11.500.5l-11 11" stroke="#111" />
              </svg>
            </WinButton>
          </WinControls>
        </TitleBar>

        <MenuBar>
          {menuBar.map((m, i) => (
            <MenuTitle key={m} $open={i === 7}>
              {m}
            </MenuTitle>
          ))}
        </MenuBar>

        <Toolbars>
          <ToolRow groups={row1} height={39} top={3} />
          <ToolRow groups={row2} height={38} top={2} />
          <ToolRow groups={row3} height={38} />
          <ToolRow groups={row4} height={39} />
        </Toolbars>

        <Main>
          <LeftBar>
            <LeftGrip />
            {leftTools.map((section, i) => (
              <LeftSection key={i} $last={i === leftTools.length - 1}>
                {section.map((item, j) => (
                  <Tool key={j} item={item} />
                ))}
              </LeftSection>
            ))}
          </LeftBar>

          <Canvas>
            <svg width="1559" height="816" viewBox="75 195 1559 816">
              <path d="M75 735 392 747" stroke="#3f8f3f" strokeDasharray="2 3" />
              <path d="M890 760 1634 783" stroke="#2f8f2f" />
              <path d="M857 245 888 196" stroke="#a33" strokeDasharray="2 3" />
              <path d="M444 1011 462 980" stroke="#b03030" />
              <path d="M606 992 608 1011" stroke="#222" strokeDasharray="2 2" />
              <path d="M370 317 640 250 894 250 872 321z" fill="#b0b0b0" stroke="#111" strokeWidth="1.200" />
              <path d="M872 321 894 250 890 760 869 997z" fill="#707070" />
              <path d="M370 317 872 321 869 997 462 980z" fill="#fff" />
              <path d="M872 321 370 317 462 980 869 997" fill="none" stroke="#111" strokeWidth="2" />
              <path d="M894 250 890 760 869 997" fill="none" stroke="#111" strokeWidth="2.500" />
            </svg>
          </Canvas>

          <Tray>
            <TrayTitle>
              baidujingyan
              <TrayPin>
                <svg width="10" height="12" viewBox="0 0 10 12">
                  <path d="M2 1h6v6H2zM0 7h10M5 7v5" fill="none" stroke="#111" strokeWidth="1.4" />
                </svg>
              </TrayPin>
              <TrayClose>x</TrayClose>
            </TrayTitle>
            {panels.map((p) => (
              <PanelRow key={p}>
                <PanelArrow />
                {p}
                <PanelClose>x</PanelClose>
              </PanelRow>
            ))}
          </Tray>
        </Main>

        <StatusBar>
          <StatusIcon>
            <svg width="15" height="15" viewBox="0 0 15 15">
              <circle cx="7.500" cy="7.500" r="6.500" fill="none" stroke="#aaa" strokeWidth="1.3" />
              <path d="M5 6a2.500 2.500 0 1 1 5 0c0 2-1.500 2-1.500 4h-2C6.500 8 5 8 5 6z" fill="#999" />
            </svg>
          </StatusIcon>
          <StatusIcon>
            <svg width="15" height="15" viewBox="0 0 15 15">
              <circle cx="7.500" cy="7.500" r="6.500" fill="none" stroke="#111" strokeWidth="1.4" />
              <path d="M6.500 6h2v5.500h-2z" fill="#111" />
              <circle cx="7.500" cy="4" r="1.200" fill="#111" />
            </svg>
          </StatusIcon>
          <StatusSep />
          <MeasureBox />
        </StatusBar>

        <Taskbar>
          <TaskItem>
            <svg width="16" height="16" viewBox="0 0 16 16">
              <path d="M0 2.300 6.800 1.300v6.200H0zM7.600 1.200 16 0v7.500H7.600zM0 8.300h6.800v6.300L0 13.700zM7.600 8.300H16V16l-8.400-1.200z" fill="#000" />
            </svg>
          </TaskItem>
          <TaskItem>
            <svg width="18" height="18" viewBox="0 0 18 18">
              <circle cx="11" cy="7" r="5.700" fill="none" stroke="#111" strokeWidth="1.200" />
              <path d="M7 11.200 1 17" stroke="#111" strokeWidth="1.200" />
            </svg>
          </TaskItem>
          <TaskItem>
            <svg width="16" height="16" viewBox="0 0 16 16">
              <circle cx="8" cy="8" r="6.300" fill="none" stroke="#111" strokeWidth="2.400" />
            </svg>
          </TaskItem>
          <Spacer $w={3} />
          <TaskItem>
            <PsBadge>Ps</PsBadge>
          </TaskItem>
          <TaskItem>
            <svg width="24" height="24" viewBox="0 0 24 24">
              <path d="M10 3a8 8 0 1 0 3 15c3 0 7-2 9-5-4 2-7 2-9 1a4 4 0 1 0-5-4" fill="none" stroke="#f2b33c" strokeWidth="3" />
            </svg>
          </TaskItem>
          <Spacer $w={2} />
          <TaskItem $open>
            <svg width="24" height="24" viewBox="0 0 24 24">
              <rect width="24" height="24" rx="4" fill="#e60f2a" />
              <path d="M14 4c-5 1-8 5-8 9a6 6 0 0 0 12 0 4 4 0 0 0-7-3" fill="none" stroke="#fff" strokeWidth="2" />
            </svg>
          </TaskItem>
          <Spacer $w={1} />
          <TaskItem $open>
            <svg width="24" height="24" viewBox="0 0 24 24">
              <circle cx="12" cy="13" r="10" fill="#7cc242" />
              <path d="M5 13h13a6 6 0 1 0-2 5" fill="none" stroke="#fff" strokeWidth="2.600" />
              <path d="M3 22c2-4 4-5 6-5M21 2c1 2 1 4 0 6" stroke="#688" fill="none" />
            </svg>
          </TaskItem>
          <Spacer $w={1} />
          <TaskItem $open $current>
            <svg width="24" height="24" viewBox="0 0 28 28">
              {SuLogo}
            </svg>
          </TaskItem>
          <Spacer $w={1} />
          <TaskItem $open>
            <svg width="24" height="24" viewBox="0 0 24 24">
              <rect y="1" width="24" height="8" fill="#4aa0e8" />
              <rect y="9" width="24" height="7" fill="#8cc84a" />
              <rect y="16" width="24" height="7" fill="#f2b030" />
              <rect x="9" y="0" width="6" height="24" fill="#8a4a1c" />
              <rect x="9.500" y="11" width="5" height="5" fill="none" stroke="#f2c040" />
            </svg>
          </TaskItem>

          <SysTray>
            <SysIcon $w={24}>
              <ChevronUp size={20} strokeWidth={1.3} color="#111" />
            </SysIcon>
            <SysIcon $w={24}>中</SysIcon>
            <SysIcon $w={32}>
              <svg width="17" height="17" viewBox="0 0 17 17">
                <rect x="1" y="1" width="15" height="15" rx="4" fill="#f05a22" />
                <path d="M12 5c-3-2-7-1-6 2s6 1 6 4-5 3-7 1" fill="none" stroke="#fff" strokeWidth="2" />
              </svg>
            </SysIcon>
            <Clock>
              <span>15:14</span>
              <span>2021/5/2</span>
            </Clock>
            <Notify>
              <svg width="17" height="15" viewBox="0 0 17 15">
                <path d="M0 0h17v11H5l-3 4v-4H0z" fill="#000" />
                <path d="M3 3h11M3 5.500h11M3 8h8" stroke="#ddd" />
              </svg>
              <NotifyCount>6</NotifyCount>
            </Notify>
          </SysTray>
        </Taskbar>

        <MenuPanel>
          {menuItems.map((m, i) =>
            m.sep ? (
              <MenuSep key={i} />
            ) : (
              <MenuItem key={i} $hot={m.hot}>
                {m.label}
                {m.sub && (
                  <MenuChevron>
                    <ChevronRight size={12} strokeWidth={1.4} />
                  </MenuChevron>
                )}
              </MenuItem>
            )
          )}
        </MenuPanel>

        <SubPanel>
          {subItems.map((s) => (
            <SubItem key={s} $hot={s === "参数楼梯"}>
              {s}
            </SubItem>
          ))}
        </SubPanel>

        <ImeBar>
          <Mic size={16} color="#1a6fc4" strokeWidth={2.6} />
          <Keyboard size={16} color="#1a6fc4" strokeWidth={2.2} />
          <User size={16} color="#aab4c0" fill="#aab4c0" />
          <Shirt size={16} color="#1a6fc4" fill="#1a6fc4" />
          <LayoutGrid size={16} color="#1a6fc4" fill="#1a6fc4" />
        </ImeBar>

        <Annotations width="1920" height="1080" viewBox="0 0 1920 1080">
          <ellipse cx="1630" cy="897" rx="12" ry="20" fill="#fff" stroke="#d8d8d8" />
          <ellipse cx="1660" cy="897" rx="12" ry="20" fill="#fff" stroke="#d8d8d8" />
          <polygon points={arrowPoints([217, 514], [400, 208])} fill="#ec2229" />
          <polygon points={arrowPoints([1311, 649], [648, 313])} fill="#ec2229" />
        </Annotations>

        <Watermark>
          <WatermarkLogo width="90" height="85" viewBox="0 0 90 85">
            <path d="M24 12C16 14 12 22 12 32V56C12 66 18 72 26 74 30 75 34 74 38 71L68 50C75 45 75 38 68 33L34 15C30 13 27 12 24 12" fill="none" stroke="#c8c8c8" strokeWidth="4.500" strokeLinecap="round" />
            <path d="M24 13V54C24 60 30 62 34 59" fill="none" stroke="#c8c8c8" strokeWidth="4" strokeLinecap="round" />
            <path d="M33 35 48 42 33 50zM51 37h3v12h-3z" fill="#b8b8b8" />
          </WatermarkLogo>
          <WatermarkText>
            <WatermarkTitle>溜溜自学</WatermarkTitle>
            <WatermarkUrl>ZIXUE.3D66.COM</WatermarkUrl>
          </WatermarkText>
        </Watermark>
      </Page>
    </>
  );
}

const Global = createGlobalStyle`
  html, body {
    margin: 0;
    padding: 0;
    background: #f0f0f0;
  }
  body {
    font-family: "Noto Sans", "Noto Sans CJK SC", sans-serif;
    font-size: 12px;
    color: #222;
  }
`;

const Page = styled.div`
  position: relative;
  width: 1920px;
  height: 1080px;
  display: flex;
  flex-direction: column;
  overflow: hidden;
`;

const TitleBar = styled.div`
  height: 21px;
  display: flex;
  align-items: center;
  padding-left: 3px;
  background: #fff;
`;

const TitleText = styled.span`
  margin-left: 4px;
  font-size: 12.5px;
  color: #333;
`;

const WinControls = styled.div`
  margin-left: auto;
  padding-right: 2px;
  display: flex;
`;

const WinButton = styled.div`
  width: 46px;
  height: 21px;
  display: flex;
  align-items: center;
  justify-content: center;
`;

const MenuBar = styled.div`
  height: 20px;
  display: flex;
  align-items: flex-end;
  background: #fff;
`;

const MenuTitle = styled.div`
  height: 18px;
  line-height: 18px;
  padding: 0 7px;
  margin-right: 1px;
  box-sizing: border-box;
  background: ${(p) => (p.$open ? "#cce8ff" : "transparent")};
  outline: ${(p) => (p.$open ? "1px solid #99d1ff" : "none")};
  outline-offset: -1px;
`;

const Toolbars = styled.div`
  display: flex;
  flex-direction: column;
  background: #f0f0f0;
`;

const Row = styled.div`
  height: ${(p) => p.$h}px;
  display: flex;
  box-sizing: border-box;
`;

const Group = styled.div`
  display: flex;
  align-items: center;
  box-sizing: border-box;
  margin-left: ${(p) => p.$pad || 0}px;
  padding: ${(p) => p.$top}px 2px 0 0;
  background: #f2f2f2;
  border-bottom: 1px solid #b9b9b9;
  box-shadow: inset -1px 0 0 #d4d4d4;
`;

const Grip = styled.span`
  align-self: stretch;
  width: 3px;
  margin: 3px 0 3px 5px;
  border-left: 2px dotted #b0b0b0;
`;

const ToolButton = styled.div`
  flex: none;
  width: 34px;
  height: 34px;
  display: flex;
  align-items: center;
  justify-content: center;
  box-sizing: border-box;
  background: ${(p) => (p.$active ? "#cde4f9" : "transparent")};
  border: 1px solid ${(p) => (p.$active ? "#9cc8ec" : "transparent")};
`;

const Caret = styled.span`
  flex: none;
  width: 22px;
  height: 34px;
  display: flex;
  align-items: center;
  justify-content: center;
  &::after {
    content: "";
    border-left: 6px solid transparent;
    border-right: 6px solid transparent;
    border-top: 7px solid #111;
  }
`;

const ToolSep = styled.span`
  flex: none;
  width: 1px;
  height: 30px;
  margin: 0 ${(p) => p.$r}px 0 ${(p) => p.$l}px;
  background: #9a9a9a;
`;

const Spacer = styled.span`
  flex: none;
  width: ${(p) => p.$w}px;
`;

const Main = styled.div`
  flex: 1;
  min-height: 0;
  display: flex;
`;

const LeftBar = styled.div`
  width: 75px;
  box-sizing: border-box;
  padding: 57px 3px 0 2px;
  background: #f0f0f0;
  border-right: 3px solid #777;
`;

const LeftGrip = styled.div`
  height: 0;
  margin-bottom: 5px;
  border-top: 2px dotted #b0b0b0;
`;

const LeftSection = styled.div`
  display: grid;
  grid-template-columns: 34px 34px;
  padding-bottom: ${(p) => (p.$last ? 2 : 3)}px;
  margin-bottom: ${(p) => (p.$last ? 0 : 4)}px;
  border-bottom: 1px solid #999;
`;

const Canvas = styled.div`
  flex: 1;
  min-width: 0;
  background: #bcbdc1;
  box-shadow: inset 0 2px 0 #6e6e6e;
  overflow: hidden;
  svg {
    display: block;
  }
`;

const Tray = styled.div`
  width: 286px;
  box-sizing: border-box;
  padding: 2px 2px 0 6px;
  background: #f6f8fc;
`;

const TrayTitle = styled.div`
  height: 17px;
  display: flex;
  align-items: center;
  padding-left: 4px;
  margin-right: -2px;
  margin-bottom: 2px;
  background: linear-gradient(#c9d8e8, #e8eef5);
  color: #222;
`;

const TrayPin = styled.span`
  margin-left: auto;
  margin-right: 9px;
  display: flex;
`;

const TrayClose = styled.span`
  width: 12px;
  height: 14px;
  margin-right: 4px;
  background: #d8343c;
  color: #fff;
  font: 700 10px/13px "Liberation Sans", sans-serif;
  text-align: center;
`;

const PanelRow = styled.div`
  height: 17px;
  margin-bottom: 2px;
  display: flex;
  align-items: center;
  padding-left: 9px;
  background: linear-gradient(#e8e8e8, #c4c4c4 45%, #b8b8b8 60%, #dcdcdc);
  box-shadow: inset 0 1px 0 #f8f8f8;
  color: #222;
`;

const PanelArrow = styled.span`
  width: 0;
  height: 0;
  margin-right: 8px;
  border-top: 4px solid transparent;
  border-bottom: 4px solid transparent;
  border-left: 6px solid #111;
`;

const PanelClose = styled.span`
  margin-left: auto;
  margin-right: 1px;
  width: 12px;
  height: 14px;
  border: 1px solid #bbb;
  background: #f0f0f0;
  font: 700 9px/13px "Liberation Sans", sans-serif;
  text-align: center;
`;

const StatusBar = styled.div`
  height: 29px;
  display: flex;
  align-items: center;
  background: #f0f0f0;
`;

const StatusIcon = styled.span`
  width: 26px;
  margin-right: 4px;
  display: flex;
  justify-content: center;
`;

const StatusSep = styled.span`
  width: 1px;
  height: 9px;
  margin-left: 2px;
  background: #777;
`;

const MeasureBox = styled.div`
  width: 300px;
  height: 23px;
  margin-left: auto;
  margin-right: 5px;
  box-sizing: border-box;
  border: 1px solid #c4c4c4;
`;

const Taskbar = styled.div`
  height: 40px;
  display: flex;
  align-items: stretch;
  background: #d8d8d8;
`;

const TaskItem = styled.div`
  position: relative;
  flex: none;
  width: 48px;
  display: flex;
  align-items: center;
  justify-content: center;
  background: ${(p) => (p.$current ? "#ececec" : "transparent")};
  &::after {
    content: "";
    display: ${(p) => (p.$open ? "block" : "none")};
    position: absolute;
    bottom: 0;
    left: ${(p) => (p.$current ? 0 : 4)}px;
    right: ${(p) => (p.$current ? 0 : 4)}px;
    height: 2px;
    background: #0a78d0;
  }
`;

const PsBadge = styled.span`
  width: 22px;
  height: 22px;
  box-sizing: border-box;
  border: 2px solid #31a8d8;
  border-radius: 3px;
  background: #062a40;
  color: #9fe0ff;
  font: 700 12px/18px "Liberation Sans", sans-serif;
  text-align: center;
`;

const SysTray = styled.div`
  margin-left: auto;
  display: flex;
  align-items: stretch;
  padding-right: 14px;
  box-shadow: inset -1px 0 0 #c0c0c0;
`;

const SysIcon = styled.span`
  width: ${(p) => p.$w}px;
  display: flex;
  align-items: center;
  justify-content: center;
  font-size: 14px;
  color: #444;
`;

const Clock = styled.div`
  width: 76px;
  display: flex;
  flex-direction: column;
  align-items: center;
  justify-content: center;
  gap: 2px;
  line-height: 17px;
  color: #111;
`;

const Notify = styled.div`
  position: relative;
  width: 38px;
  display: flex;
  align-items: center;
  justify-content: center;
`;

const NotifyCount = styled.span`
  position: absolute;
  right: 4px;
  bottom: 5px;
  width: 15px;
  height: 15px;
  border-radius: 50%;
  border: 1px solid #555;
  background: #d8d8d8;
  font: 700 11px/15px "Liberation Sans", sans-serif;
  text-align: center;
`;

const MenuPanel = styled.div`
  position: absolute;
  left: 379px;
  top: 43px;
  width: 170px;
  box-sizing: border-box;
  padding: 1px 0 4px;
  background: #f2f2f2;
  border-left: 1px solid #ccc;
  box-shadow: 2px 2px 3px rgba(0, 0, 0, 0.4);
`;

const MenuSep = styled.div`
  height: 7px;
  margin-left: 29px;
  position: relative;
  &::after {
    content: "";
    position: absolute;
    left: 0;
    right: 4px;
    top: 3px;
    height: 1px;
    background: #d2d2d2;
  }
`;

const MenuItem = styled.div`
  height: 22px;
  line-height: 20px;
  padding: 2px 0 0 31px;
  margin-left: 2px;
  box-sizing: border-box;
  display: flex;
  align-items: center;
  background: ${(p) => (p.$hot ? "#8cc3f5" : "transparent")};
  color: #222;
`;

const MenuChevron = styled.span`
  margin-left: auto;
  margin-right: 8px;
  display: flex;
`;

const SubPanel = styled.div`
  position: absolute;
  left: 544px;
  top: 189px;
  width: 137px;
  box-sizing: border-box;
  padding: 2px 3px 3px 2px;
  background: #f2f2f2;
  box-shadow: 2px 2px 3px rgba(0, 0, 0, 0.4);
`;

const SubItem = styled.div`
  height: 22px;
  line-height: 22px;
  padding-left: 32px;
  background: ${(p) => (p.$hot ? "#8cc3f5" : "transparent")};
  color: #222;
`;

const ImeBar = styled.div`
  position: absolute;
  left: 1807px;
  top: 912px;
  height: 20px;
  box-sizing: border-box;
  padding-right: 1px;
  display: flex;
  align-items: center;
  background: #fff;
  border: 1px solid #dde;
  border-left: 0;
  svg {
    flex: none;
    margin: 0 3px;
  }
`;

const Annotations = styled.svg`
  position: absolute;
  left: 0;
  top: 0;
  pointer-events: none;
`;

const Watermark = styled.div`
  position: absolute;
  left: 1474px;
  top: 893px;
  width: 340px;
  height: 160px;
  box-sizing: border-box;
  padding: 43px 0 0 16px;
  display: flex;
  align-items: flex-start;
  gap: 9px;
  background: #1f2e54;
`;

const WatermarkLogo = styled.svg`
  flex: none;
  margin-top: -6px;
`;

const WatermarkText = styled.div`
  display: flex;
  flex-direction: column;
  color: #c8c8c8;
`;

const WatermarkTitle = styled.div`
  font: 900 46px/46px "Noto Sans CJK SC", sans-serif;
  letter-spacing: 5px;
  white-space: nowrap;
`;

const WatermarkUrl = styled.div`
  margin-top: 6px;
  font: 400 17.5px/18px "Liberation Sans", sans-serif;
  letter-spacing: 4px;
  white-space: nowrap;
`;
